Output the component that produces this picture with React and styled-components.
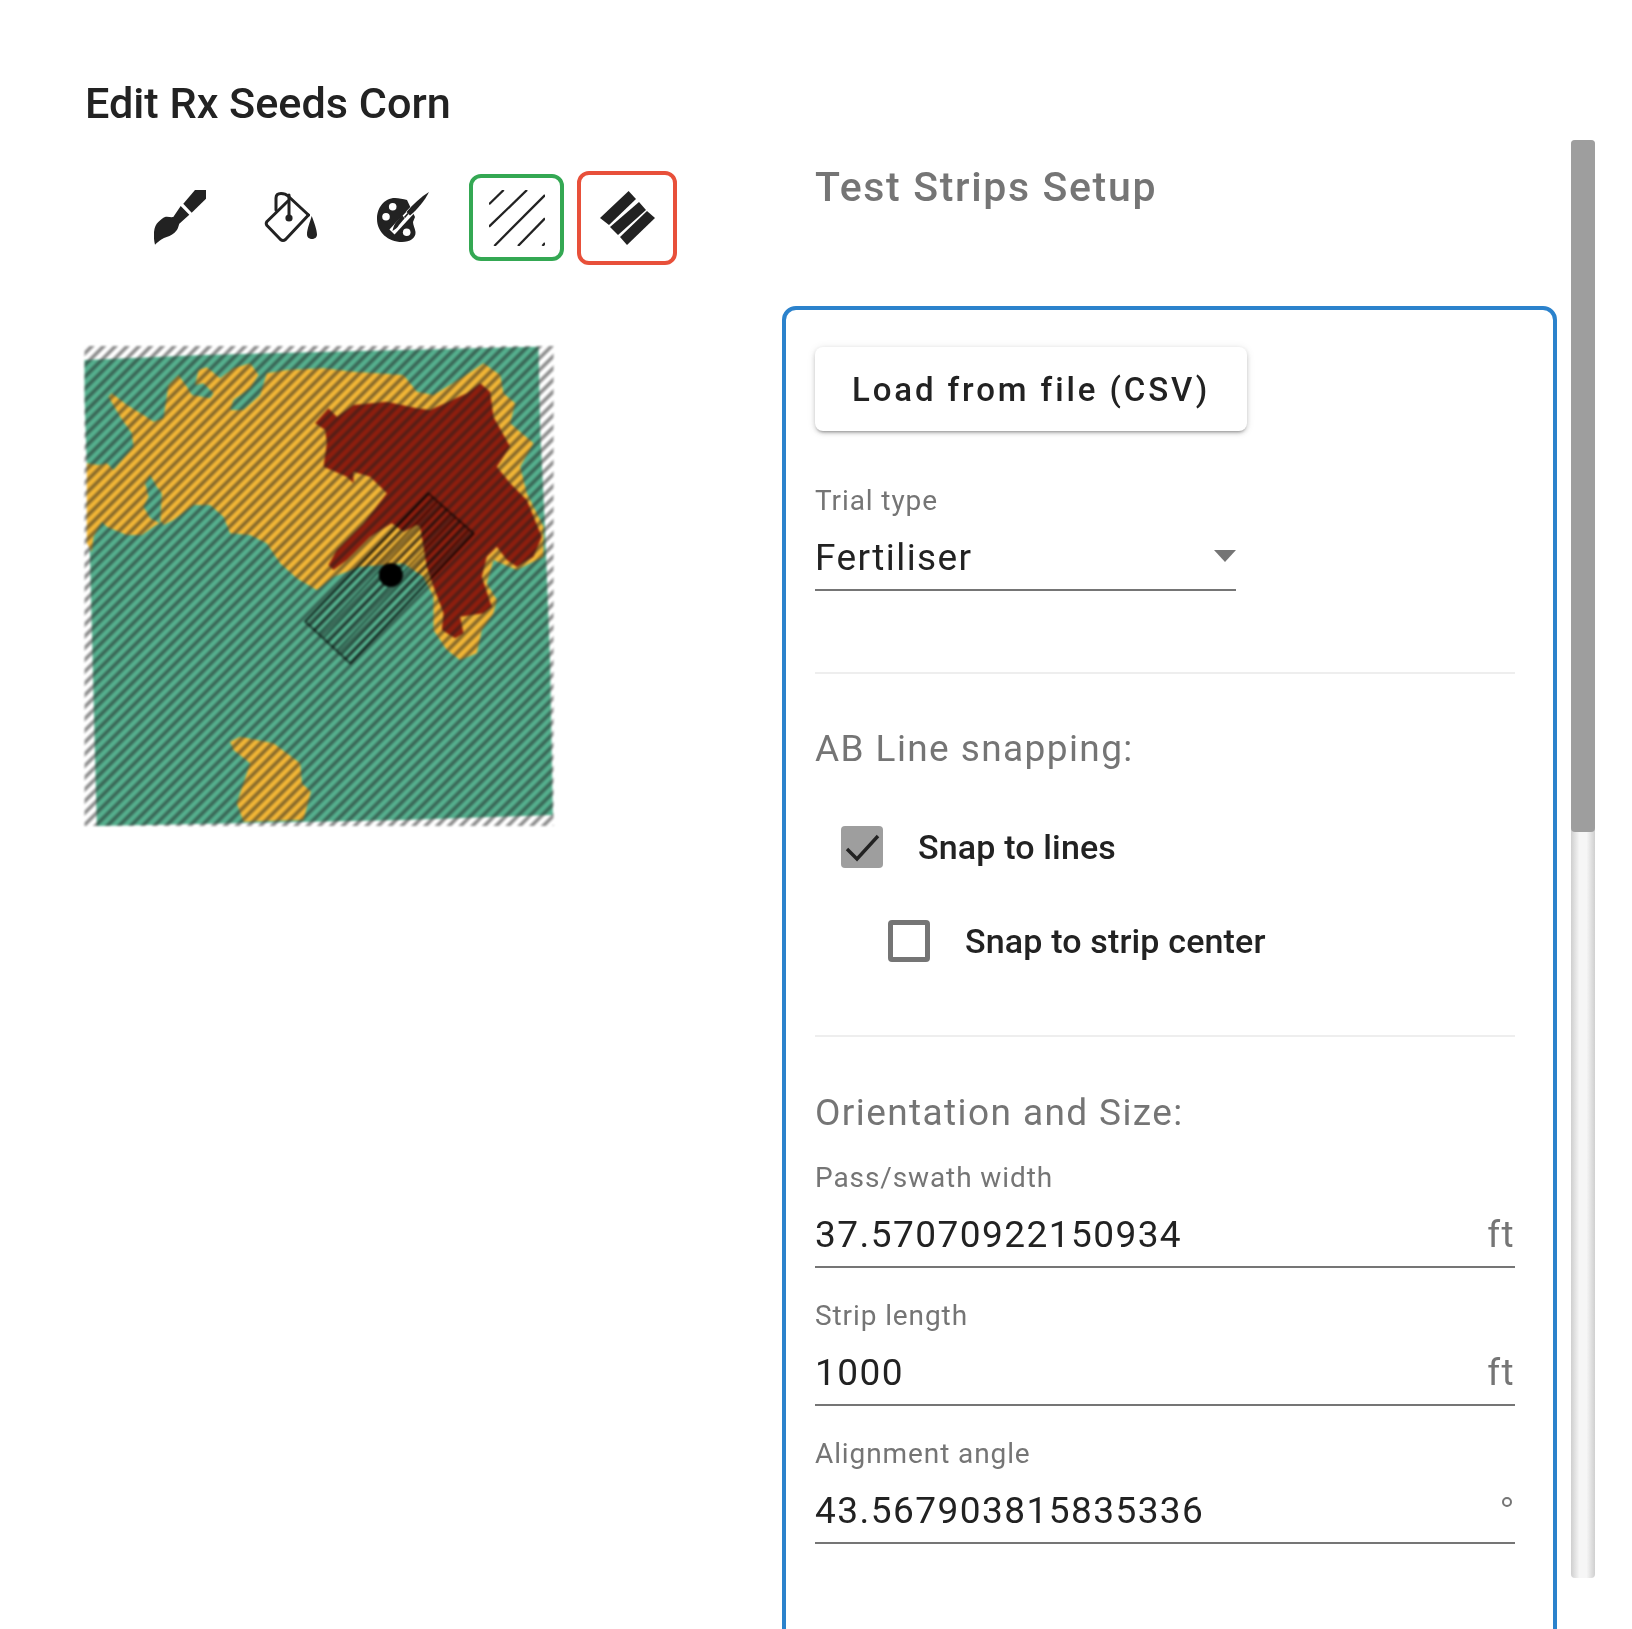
import React from 'react'
import styled, { createGlobalStyle } from 'styled-components'

const GlobalStyle = createGlobalStyle`
  html, body {
    margin: 0;
    padding: 0;
    background: #fff;
    font-family: Roboto, "Liberation Sans", sans-serif;
  }
  * {
    box-sizing: border-box;
  }
`

const Page = styled.div`
  display: flex;
  height: 1629px;
  overflow: hidden;
  filter: blur(0.4px);
`

const LeftColumn = styled.div`
  width: 782px;
  padding: 80px 0 0 85px;
  flex-shrink: 0;
`

const Title = styled.h1`
  margin: 0;
  font-size: 43.2px;
  line-height: 48px;
  font-weight: 500;
  color: #222;
`

const Toolbar = styled.div`
  display: flex;
  align-items: center;
  margin: 43px 0 0 41px;
  height: 93px;
`

const Tool = styled.div`
  display: flex;
  align-items: center;
  justify-content: center;
  flex-shrink: 0;
  width: ${props => props.$width}px;
  height: ${props => props.$height || 56}px;
  margin-left: ${props => props.$gap || 0}px;
  border-radius: 12px;
  border: ${props => (props.$outline ? `4px solid ${props.$outline}` : 'none')};
`

const MapSvg = styled.svg`
  display: block;
  width: 470px;
  height: 480px;
  margin: 82px 0 0 -1px;
  filter: blur(0.9px);
`

const RightColumn = styled.div`
  width: 775px;
  flex-shrink: 0;
`

const SectionTitle = styled.h2`
  margin: 0;
  padding: 163px 0 0 33px;
  height: 306px;
  font-size: 41px;
  line-height: 48px;
  font-weight: 500;
  letter-spacing: 1.65px;
  color: #757575;
`

const Panel = styled.div`
  border: 4px solid #2b82cc;
  border-radius: 14px;
  height: 1340px;
  padding: 37px 38px 0 29px;
`

const LoadButton = styled.button`
  display: block;
  width: 432px;
  height: 84px;
  padding: 0;
  border: none;
  border-radius: 8px;
  background: #fff;
  font-family: inherit;
  font-size: 33px;
  font-weight: 500;
  letter-spacing: 2.9px;
  color: #222;
  box-shadow: 0 3px 3px -2px rgba(0, 0, 0, 0.3), 0 2px 5px 0 rgba(0, 0, 0, 0.16), 0 1px 8px 0 rgba(0, 0, 0, 0.1);
`

const TrialLabel = styled.div`
  margin-top: 53px;
  font-size: 28px;
  line-height: 34px;
  letter-spacing: 0.9px;
  color: #757575;
`

const FieldLabel = styled.div`
  font-size: 28px;
  line-height: 34px;
  letter-spacing: 0.9px;
  color: #757575;
`

const SelectBox = styled.div`
  display: flex;
  align-items: center;
  justify-content: space-between;
  width: 421px;
  height: 66px;
  margin-top: 7px;
  border-bottom: 2px solid #757575;
  font-size: 37px;
  letter-spacing: 1.4px;
  color: #222;
`

const Arrow = styled.span`
  width: 0;
  height: 0;
  margin-bottom: 2px;
  border-left: 11.5px solid transparent;
  border-right: 11.5px solid transparent;
  border-top: 12px solid #757575;
`

const Divider = styled.hr`
  margin: ${props => props.$top}px 0 0;
  height: 2px;
  border: none;
  background: #eee;
`

const GroupTitle = styled.div`
  margin-top: ${props => props.$top}px;
  font-size: 37px;
  line-height: 44px;
  letter-spacing: 1.4px;
  color: #757575;
`

const CheckRow = styled.div`
  display: flex;
  align-items: center;
  gap: 35px;
  height: 42px;
  margin: ${props => props.$top}px 0 0 ${props => props.$indent}px;
`

const CheckBox = styled.span`
  display: flex;
  align-items: center;
  justify-content: center;
  width: 42px;
  height: 42px;
  border-radius: 4px;
  background: ${props => (props.$checked ? '#9e9e9e' : '#fff')};
  border: ${props => (props.$checked ? 'none' : '5px solid #757575')};
`

const CheckLabel = styled.span`
  font-size: 34px;
  font-weight: 500;
  letter-spacing: 0.15px;
  color: #222;
`

const FieldBlock = styled.div`
  margin-top: ${props => props.$top}px;
`

const InputLine = styled.div`
  display: flex;
  align-items: center;
  justify-content: space-between;
  height: 65px;
  margin-top: 8px;
  border-bottom: 2px solid #757575;
  font-size: 37px;
  letter-spacing: 1.45px;
  color: #222;
`

const Unit = styled.span`
  color: #757575;
`

const DegreeUnit = styled.span`
  width: 10px;
  height: 10px;
  margin: 0 3px 18px 0;
  border: 2.5px solid #757575;
  border-radius: 50%;
`

const Scrollbar = styled.div`
  width: 24px;
  height: 1438px;
  margin: 140px 0 0 14px;
  flex-shrink: 0;
  border-radius: 4px;
  background: linear-gradient(to right, #cfcfcf, #f6f6f6 35%, #f6f6f6 65%, #cfcfcf);
`

const ScrollThumb = styled.div`
  width: 24px;
  height: 692px;
  border-radius: 4px;
  background: #9e9e9e;
`

const BrushIcon = () => (
  <svg width="54" height="56" viewBox="0 0 54 56">
    <path fill="#222" d="M41 0H52V8.700L37.700 22.700L29.300 13.700Z" />
    <path fill="#222" d="M26.700 16L35.300 24.700L25.300 33.700C24.500 36 24 38.500 22.700 40.300C20 44 16.500 46 12.700 47C9 48 6 50 1 54.700C0 50 -0.500 46 0 42C0.500 37.500 2 34 4.300 32C6.500 30 9 27.500 11 27C14 26.500 17 27.500 19.300 27Z" />
  </svg>
)

const BucketIcon = () => (
  <svg width="54" height="52" viewBox="0 0 54 52">
    <g fill="none" stroke="#222" strokeWidth="3" strokeLinejoin="round" strokeLinecap="round">
      <path d="M24 9L3 29.500Q1.500 31.500 3 33.500L16.500 47.500Q19 49.500 21.500 47.500L44.500 23" />
      <path d="M12 18V6Q12 1.500 17 1.500Q21.500 1.500 24 4L44.500 23" />
      <path d="M25 3V24" />
    </g>
    <circle cx="25" cy="26" r="3.600" fill="#222" />
    <path fill="#222" d="M47.700 24C50 30 53 38 53 42.500C53 48.500 43 48.500 43 42.500C43 37 46 30 47.700 24Z" />
  </svg>
)

const PaletteIcon = () => (
  <svg width="54" height="51" viewBox="0 0 54 51">
    <path fill="#222" d="M18 6C7 6 0 16 0 27C0 40 11 50 25 50C33 50 39 46 38.500 40C38 36 36 33 36 30L38 25L30 8C26 7 22 6 18 6Z" />
    <circle cx="15.700" cy="14.700" r="3.800" fill="#fff" />
    <circle cx="9" cy="24.700" r="3.800" fill="#fff" />
    <circle cx="29.700" cy="40.300" r="3.800" fill="#fff" />
    <path fill="none" stroke="#fff" strokeWidth="7" d="M52 0L15 40" />
    <path fill="#222" d="M52 0C48 8 41 17 33 23.500L29.500 20C36 12 44 5 52 0Z" />
    <path fill="none" stroke="#222" strokeWidth="1.600" d="M31 21.500L27.500 25.500M28.500 19.500L24.500 23.500L27 27" />
    <path fill="#222" d="M24 24L27 27L22 33C20.500 36 18 37.500 15.500 39C16 35.500 17.500 32 20 29Z" />
  </svg>
)

const HatchThinIcon = () => (
  <svg width="56" height="56" viewBox="0 0 56 56">
    <g stroke="#222" strokeWidth="2.300">
      <path d="M0 14.300L14.700 0" />
      <path d="M0 36.700L38 0" />
      <path d="M5.300 56L56 5" />
      <path d="M29 56L56 28.300" />
      <path d="M53.500 56L56 53" />
    </g>
  </svg>
)

const HatchBoldIcon = () => (
  <svg width="55" height="54" viewBox="0 0 55 54">
    <g fill="#222">
      <polygon points="0,27 28.600,0 36,8 9,34" />
      <polygon points="10,36 39,11 46,19 18,44" />
      <polygon points="20,46 47,20 55,27 27,54" />
    </g>
  </svg>
)

const CheckMark = () => (
  <svg width="42" height="42" viewBox="0 0 42 42">
    <path fill="none" stroke="#222" strokeWidth="3.400" d="M6 23L16 33L37 10" />
  </svg>
)

const FIELD = '43,90 400,75 1405,50 1410,300 1425,600 1440,1000 1448,1455 1000,1470 80,1488 70,1100 60,700 43,200'
const YELLOW_MAIN = '50,400 85,405 110,400 130,420 190,350 185,310 150,260 115,200 125,190 170,225 220,255 250,275 280,265 295,165 325,135 350,170 365,195 420,205 430,190 400,160 375,165 385,120 410,112 450,145 490,115 540,100 565,135 540,175 490,210 480,240 520,240 570,195 590,130 650,120 760,115 850,125 1000,135 1040,185 1090,195 1180,140 1240,100 1290,135 1300,190 1335,220 1320,280 1390,340 1350,410 1370,490 1420,590 1420,680 1340,720 1270,690 1250,760 1280,810 1270,850 1235,900 1220,970 1170,990 1130,960 1090,900 1090,800 1060,740 1000,700 870,710 790,740 740,780 680,745 630,700 590,640 540,615 480,610 460,560 420,525 370,525 310,570 280,585 275,575 250,590 215,615 170,615 110,590 95,575 70,620 65,665 50,640'
const YELLOW_SOUTH = '480,1235 510,1220 610,1240 690,1300 695,1360 722,1385 700,1470 520,1475 500,1420 540,1300 490,1260'
const GREEN_ISLAND = '240,435 260,470 275,490 270,580 240,565 220,530 235,500 225,460'
const RED = '735,280 775,235 800,260 850,225 950,215 1040,235 1080,240 1190,190 1230,160 1260,185 1270,260 1320,350 1280,410 1320,460 1370,510 1415,620 1390,680 1340,710 1310,690 1280,650 1250,680 1235,740 1265,830 1240,850 1170,860 1180,910 1155,925 1115,900 1120,850 1090,770 1070,710 1050,590 1040,585 1000,605 965,580 900,620 830,690 790,720 775,705 800,660 880,580 950,490 900,440 850,425 850,460 830,440 760,410 770,340 765,300'

// corners of the test strip block
const A = [705, 875]
const B = [1075, 490]
const C = [1210, 610]
const D = [840, 1000]

const lerp = (p, q, t) => [p[0] + (q[0] - p[0]) * t, p[1] + (q[1] - p[1]) * t]
const stripLines = Array.from({ length: 11 }, (_, i) => {
  const t = i / 10
  return [lerp(A, D, t), lerp(B, C, t)]
})

const FieldMap = () => (
  <MapSvg viewBox="43 48 1407 1440">
    <defs>
      <pattern id="stripes" patternUnits="userSpaceOnUse" width="50" height="25" patternTransform="rotate(-45)">
        <rect width="50" height="11" fill="#1e1e1e" fillOpacity="0.5" />
      </pattern>
    </defs>
    <rect x="43" y="48" width="1407" height="1440" fill="#fff" />
    <polygon points={FIELD} fill="#55b08e" />
    <polygon points={YELLOW_MAIN} fill="#f2b636" />
    <polygon points={GREEN_ISLAND} fill="#55b08e" />
    <polygon points={YELLOW_SOUTH} fill="#f2b636" />
    <polygon points={RED} fill="#8e1e0e" />
    <rect x="43" y="48" width="1407" height="1440" fill="url(#stripes)" />
    {stripLines.map(([from, to], i) => (
      <line key={i} x1={from[0]} y1={from[1]} x2={to[0]} y2={to[1]} stroke="#000" strokeOpacity="0.55" strokeWidth="6" />
    ))}
    <polygon points={`${A} ${B} ${C} ${D}`} fill="none" stroke="#000" strokeOpacity="0.6" strokeWidth="6" />
    <circle cx="962" cy="735" r="36" fill="#000" />
  </MapSvg>
)

const App = () => (
  <Page>
    <GlobalStyle />
    <LeftColumn>
      <Title>Edit Rx Seeds Corn</Title>
      <Toolbar>
        <Tool $width={110}><BrushIcon /></Tool>
        <Tool $width={109}><BucketIcon /></Tool>
        <Tool $width={117}><PaletteIcon /></Tool>
        <Tool $width={95} $height={87} $gap={7} $outline="#34a853"><HatchThinIcon /></Tool>
        <Tool $width={100} $height={94} $gap={13} $outline="#e8503a"><HatchBoldIcon /></Tool>
      </Toolbar>
      <FieldMap />
    </LeftColumn>
    <RightColumn>
      <SectionTitle>Test Strips Setup</SectionTitle>
      <Panel>
        <LoadButton>Load from file (CSV)</LoadButton>
        <TrialLabel>Trial type</TrialLabel>
        <SelectBox>
          Fertiliser
          <Arrow />
        </SelectBox>
        <Divider $top={81} />
        <GroupTitle $top={53}>AB Line snapping:</GroupTitle>
        <CheckRow $top={55} $indent={26}>
          <CheckBox $checked><CheckMark /></CheckBox>
          <CheckLabel>Snap to lines</CheckLabel>
        </CheckRow>
        <CheckRow $top={52} $indent={73}>
          <CheckBox />
          <CheckLabel>Snap to strip center</CheckLabel>
        </CheckRow>
        <Divider $top={73} />
        <GroupTitle $top={54}>Orientation and Size:</GroupTitle>
        <FieldBlock $top={26}>
          <FieldLabel>Pass/swath width</FieldLabel>
          <InputLine>37.57070922150934<Unit>ft</Unit></InputLine>
        </FieldBlock>
        <FieldBlock $top={31}>
          <FieldLabel>Strip length</FieldLabel>
          <InputLine>1000<Unit>ft</Unit></InputLine>
        </FieldBlock>
        <FieldBlock $top={31}>
          <FieldLabel>Alignment angle</FieldLabel>
          <InputLine>43.567903815835336<DegreeUnit /></InputLine>
        </FieldBlock>
      </Panel>
    </RightColumn>
    <Scrollbar>
      <ScrollThumb />
    </Scrollbar>
  </Page>
)

export default App
